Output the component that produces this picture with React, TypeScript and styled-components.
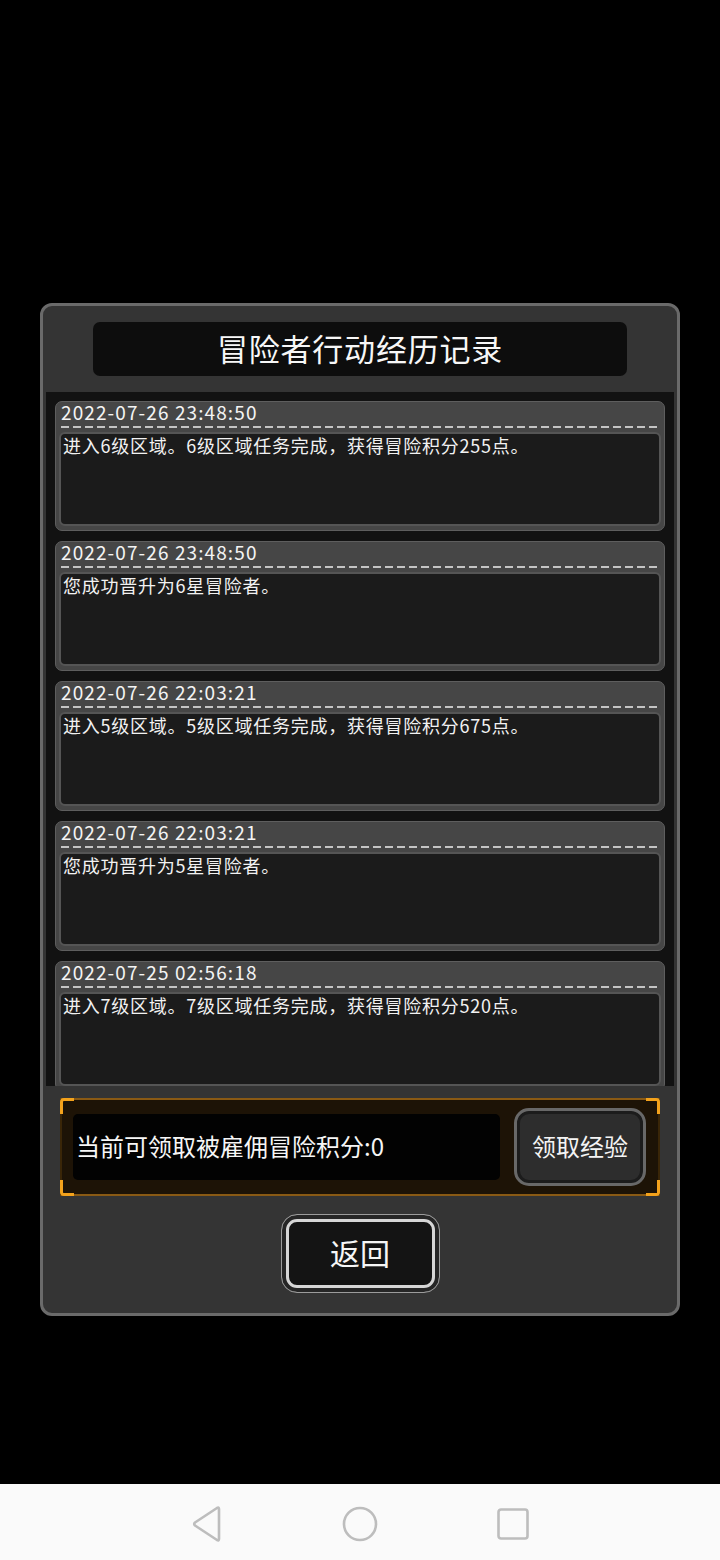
import React from 'react';
import styled, { createGlobalStyle } from 'styled-components';

const GlobalStyle = createGlobalStyle`
  html, body {
    margin: 0;
    padding: 0;
    background: #000;
  }
  body {
    font-family: "Noto Sans CJK SC", "Noto Sans", sans-serif;
    color: #f4f4f4;
  }
`;

interface LogEntry {
  time: string;
  text: string;
}

const entries: LogEntry[] = [
  { time: '2022-07-26 23:48:50', text: '进入6级区域。6级区域任务完成，获得冒险积分255点。' },
  { time: '2022-07-26 23:48:50', text: '您成功晋升为6星冒险者。' },
  { time: '2022-07-26 22:03:21', text: '进入5级区域。5级区域任务完成，获得冒险积分675点。' },
  { time: '2022-07-26 22:03:21', text: '您成功晋升为5星冒险者。' },
  { time: '2022-07-25 02:56:18', text: '进入7级区域。7级区域任务完成，获得冒险积分520点。' },
];

const Screen = styled.div`
  width: 720px;
  height: 1560px;
  display: flex;
  flex-direction: column;
  background: #000;
  overflow: hidden;
`;

const Stage = styled.main`
  flex: 1;
  display: flex;
  flex-direction: column;
  align-items: center;
  padding-top: 303px;
`;

const Panel = styled.section`
  width: 640px;
  box-sizing: border-box;
  border: 3px solid #6a6a6a;
  border-radius: 12px;
  background: #343434;
  padding: 16px 0 20px;
  display: flex;
  flex-direction: column;
  align-items: center;
`;

const TitleBox = styled.div`
  width: 534px;
  height: 54px;
  box-sizing: border-box;
  padding-bottom: 4px;
  border-radius: 7px;
  background: #0d0d0d;
  display: flex;
  align-items: center;
  justify-content: center;
  font-size: 31px;
  color: #f7f7f7;
  letter-spacing: 0.8px;
`;

const LogList = styled.div`
  width: 628px;
  height: 694px;
  box-sizing: border-box;
  margin-top: 16px;
  padding: 9px;
  background: #121212;
  overflow: hidden;
  display: flex;
  flex-direction: column;
  gap: 10px;
`;

const Card = styled.div`
  flex-shrink: 0;
  height: 130px;
  box-sizing: border-box;
  border: 1px solid #5e5e5e;
  border-radius: 7px;
  background: #464646;
  padding: 0 3px 4px;
  display: flex;
  flex-direction: column;
`;

const Stamp = styled.div`
  padding-left: 2px;
  margin-top: -2px;
  height: 26px;
  font-size: 19px;
  line-height: 23px;
  letter-spacing: 1.1px;
  color: #f4f4f4;
`;

const Dashes = styled.div`
  height: 2px;
  margin: 0 2px 4px;
  background: repeating-linear-gradient(to right, #c4c4c4 0 8px, transparent 8px 12px);
`;

const Body = styled.div`
  flex: 1;
  border: 2px solid #555;
  border-radius: 6px;
  background: #1b1b1b;
  padding: 0 2px;
  font-size: 18px;
  line-height: 22px;
  letter-spacing: 0.75px;
  color: #f2f2f2;
`;

const ClaimBar = styled.div`
  position: relative;
  width: 600px;
  height: 98px;
  box-sizing: border-box;
  margin-top: 12px;
  border-top: 2px solid #8a5a14;
  border-bottom: 2px solid #8a5a14;
  border-left: 2px solid #3a2608;
  border-right: 2px solid #3a2608;
  background: #1d1306;
  padding: 0 12px 0 11px;
  display: flex;
  align-items: center;
  gap: 14px;
`;

const Corner = styled.span<{ $top: boolean; $left: boolean }>`
  position: absolute;
  width: 11px;
  height: 13px;
  ${p => (p.$top ? 'top: -2px;' : 'bottom: -2px;')}
  ${p => (p.$left ? 'left: -2px;' : 'right: -2px;')}
  border: 0 solid #f3a21c;
  ${p => (p.$top ? 'border-top-width: 3px;' : 'border-bottom-width: 3px;')}
  ${p => (p.$left ? 'border-left-width: 3px;' : 'border-right-width: 3px;')}
  border-${p => (p.$top ? 'top' : 'bottom')}-${p => (p.$left ? 'left' : 'right')}-radius: 4px;
`;

const PointsBox = styled.div`
  width: 427px;
  height: 66px;
  box-sizing: border-box;
  border-radius: 5px;
  background: #020202;
  padding: 0 0 3px 3px;
  display: flex;
  align-items: center;
  font-size: 24px;
  color: #f6f6f6;
`;

const ClaimButton = styled.button`
  width: 132px;
  height: 78px;
  box-sizing: border-box;
  border: 3px solid #686868;
  border-radius: 15px;
  background: #2d2d2d;
  box-shadow: inset 0 0 0 3px #1c1c1c;
  font-family: inherit;
  font-size: 24px;
  color: #f4f4f4;
  padding: 0 0 3px;
  cursor: pointer;
`;

const BackButton = styled.button`
  width: 159px;
  height: 79px;
  box-sizing: border-box;
  margin-top: 18px;
  border: 1px solid #9c9c9c;
  border-radius: 16px;
  background: #141414;
  box-shadow: inset 0 0 0 4px #262626, inset 0 0 0 7px #d6d6d6;
  font-family: inherit;
  font-size: 30px;
  color: #f6f6f6;
  padding: 0 0 4px;
  cursor: pointer;
`;

const NavBar = styled.nav`
  height: 76px;
  box-sizing: border-box;
  padding-top: 4px;
  background: #fafafa;
  display: flex;
  justify-content: center;
  align-items: center;
`;

const NavSlot = styled.div`
  width: 153px;
  display: flex;
  justify-content: center;
  align-items: center;
`;

const navStroke = { fill: 'none', stroke: '#bdbdbd', strokeWidth: 2.6, strokeLinejoin: 'round' as const };

export default function App() {
  return (
    <Screen>
      <GlobalStyle />
      <Stage>
        <Panel>
          <TitleBox>冒险者行动经历记录</TitleBox>
          <LogList>
            {entries.map((e, i) => (
              <Card key={i}>
                <Stamp>{e.time}</Stamp>
                <Dashes />
                <Body>{e.text}</Body>
              </Card>
            ))}
          </LogList>
          <ClaimBar>
            <Corner $top $left />
            <Corner $top $left={false} />
            <Corner $top={false} $left />
            <Corner $top={false} $left={false} />
            <PointsBox>当前可领取被雇佣冒险积分:0</PointsBox>
            <ClaimButton>领取经验</ClaimButton>
          </ClaimBar>
          <BackButton>返回</BackButton>
        </Panel>
      </Stage>
      <NavBar>
        <NavSlot>
          <svg width="32" height="36" viewBox="0 0 32 36">
            <path d="M28 3 L28 33 Q28 35 26 34 L4 19.5 Q2.5 18 4 16.5 L26 2 Q28 1 28 3 Z" {...navStroke} />
          </svg>
        </NavSlot>
        <NavSlot>
          <svg width="36" height="36" viewBox="0 0 36 36">
            <circle cx="18" cy="18" r="16" {...navStroke} />
          </svg>
        </NavSlot>
        <NavSlot>
          <svg width="34" height="34" viewBox="0 0 34 34">
            <rect x="2.5" y="2.5" width="29" height="29" rx="2.5" {...navStroke} />
          </svg>
        </NavSlot>
      </NavBar>
    </Screen>
  );
}
